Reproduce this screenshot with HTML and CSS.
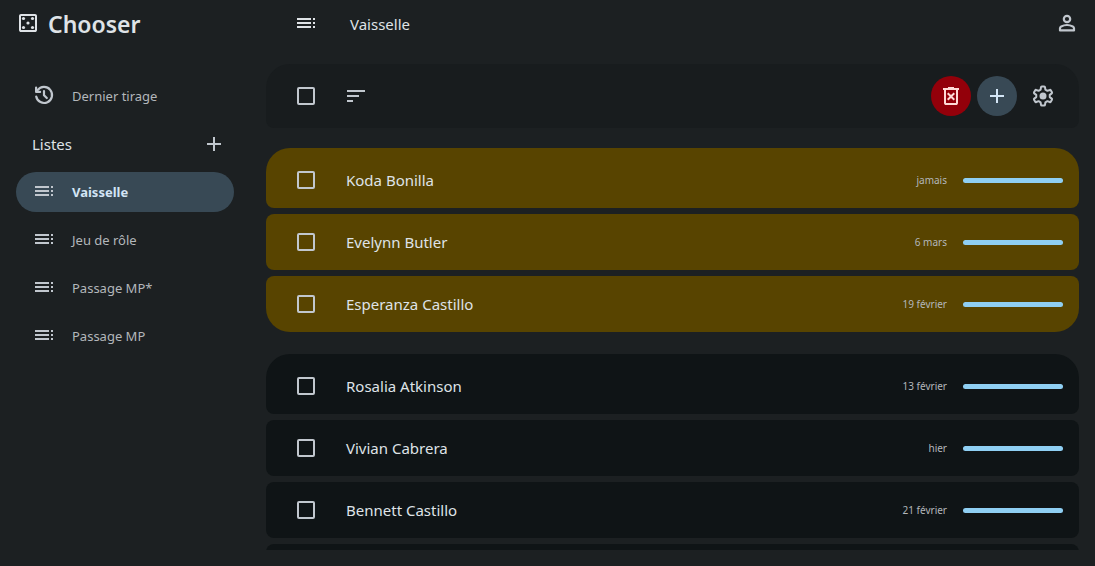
FILE: index.html
```html
<!DOCTYPE html>
<html lang="fr">
<head>
<meta charset="utf-8">
<meta name="viewport" content="width=device-width, initial-scale=1">
<title>Chooser</title>
<link rel="stylesheet" href="styles.css">
</head>
<body>
<svg class="sprite" aria-hidden="true">
  <symbol id="toc" viewBox="0 0 24 24"><path d="M3 7h14v2H3zM3 11h14v2H3zM3 15h14v2H3zM19 7h2v2h-2zM19 11h2v2h-2zM19 15h2v2h-2z"/></symbol>
  <symbol id="plus" viewBox="0 0 24 24"><path d="M11 13H5v-2h6V5h2v6h6v2h-6v6h-2z"/></symbol>
  <symbol id="casino" viewBox="0 0 24 24"><path fill-rule="evenodd" d="M5 3h14q.83 0 1.41.59T21 5v14q0 .83-.59 1.41T19 21H5q-.83 0-1.41-.59T3 19V5q0-.83.59-1.41T5 3zm0 2v14h14V5z"/><circle cx="7.5" cy="7.5" r="1.6"/><circle cx="16.5" cy="7.5" r="1.6"/><circle cx="12" cy="12" r="1.6"/><circle cx="7.5" cy="16.5" r="1.6"/><circle cx="16.5" cy="16.5" r="1.6"/></symbol>
  <symbol id="history" viewBox="0 0 24 24"><g fill="none" stroke="currentColor" stroke-width="2.2" stroke-linecap="round" stroke-linejoin="round"><path d="M4.200 13.500A8 8 0 1 0 5.600 7.200L4.600 8.200M12 8v4.200l2.800 2.800"/><path d="M4.100 4.500v4.400h4"/></g></symbol>
  <symbol id="sort" viewBox="0 0 24 24"><path d="M3 18v-2h6v2zM3 13v-2h12v2zM3 8V6h18v2z"/></symbol>
  <symbol id="person" viewBox="0 0 24 24"><g fill="none" stroke="currentColor" stroke-width="2.200" stroke-linejoin="round"><circle cx="12" cy="8" r="3.200"/><path d="M5 19.400v-2.200q0-1.200 1.200-1.800Q9 14 12 14t5.800 1.400q1.200.6 1.200 1.800v2.200z"/></g></symbol>
  <symbol id="trash" viewBox="0 0 24 24"><path d="m9.4 16.5 2.6-2.6 2.6 2.6 1.4-1.4-2.6-2.6L16 9.900l-1.400-1.400-2.600 2.600-2.600-2.600L8 9.900l2.600 2.600L8 15.100zM7 21q-.83 0-1.410-.590T5 19V6H4V4h5V3h6v1h5v2h-1v13q0 .830-.590 1.410T17 21zM17 6H7v13h10z"/></symbol>
  <symbol id="gear" viewBox="0 0 24 24"><path fill="none" stroke="currentColor" stroke-width="2" stroke-linejoin="round" d="M10.800 2.500h2.400q.7 0 .8.700l.4 2.500 2 1.150 2.300-.9q.7-.3 1.050.3l1.200 2.100q.35.600-.2 1.050l-2 1.500v2.200l2 1.500q.550.450.2 1.050l-1.200 2.100q-.350.600-1.050.300l-2.300-.900-2 1.150-.4 2.500q-.1.700-.8.700h-2.400q-.7 0-.8-.700l-.4-2.500-2-1.150-2.300.9q-.7.300-1.050-.3l-1.200-2.100q-.350-.600.2-1.050l2-1.500v-2.200l-2-1.500q-.550-.450-.2-1.050l1.200-2.100q.350-.600 1.050-.300l2.300.9 2-1.150.4-2.500q.1-.7.8-.7z"/><circle cx="12" cy="12" r="3.500"/></symbol>
</svg>

<div class="app">
  <aside class="sidebar">
    <h1 class="brand"><svg class="icon"><use href="#casino"/></svg>Chooser</h1>
    <nav class="nav" aria-label="Navigation">
      <a class="nav-item" href="#tirage"><svg class="icon"><use href="#history"/></svg>Dernier tirage</a>
      <div class="nav-heading">
        <h2 class="nav-title">Listes</h2>
        <button class="icon-button" type="button" aria-label="Ajouter une liste"><svg class="icon"><use href="#plus"/></svg></button>
      </div>
      <a class="nav-item active" href="#vaisselle" aria-current="page"><svg class="icon"><use href="#toc"/></svg>Vaisselle</a>
      <a class="nav-item" href="#jeu"><svg class="icon"><use href="#toc"/></svg>Jeu de rôle</a>
      <a class="nav-item" href="#mp-etoile"><svg class="icon"><use href="#toc"/></svg>Passage MP*</a>
      <a class="nav-item" href="#mp"><svg class="icon"><use href="#toc"/></svg>Passage MP</a>
    </nav>
  </aside>

  <main class="main">
    <header class="topbar">
      <svg class="icon"><use href="#toc"/></svg>
      <h2 class="page-title">Vaisselle</h2>
      <button class="account" type="button" aria-label="Compte"><svg class="icon"><use href="#person"/></svg></button>
    </header>

    <div class="toolbar">
      <input class="check" type="checkbox" aria-label="Tout sélectionner">
      <button class="icon-button sort" type="button" aria-label="Trier"><svg class="icon"><use href="#sort"/></svg></button>
      <div class="actions">
        <button class="icon-button danger" type="button" aria-label="Supprimer"><svg class="icon"><use href="#trash"/></svg></button>
        <button class="icon-button tonal" type="button" aria-label="Ajouter"><svg class="icon"><use href="#plus"/></svg></button>
        <button class="icon-button" type="button" aria-label="Paramètres"><svg class="icon"><use href="#gear"/></svg></button>
      </div>
    </div>

    <div class="lists">
      <ul class="group selected">
        <li class="row"><input class="check" type="checkbox" id="p1"><label class="name" for="p1">Koda Bonilla</label><span class="date">jamais</span><span class="bar"></span></li>
        <li class="row"><input class="check" type="checkbox" id="p2"><label class="name" for="p2">Evelynn Butler</label><span class="date">6 mars</span><span class="bar"></span></li>
        <li class="row"><input class="check" type="checkbox" id="p3"><label class="name" for="p3">Esperanza Castillo</label><span class="date">19 février</span><span class="bar"></span></li>
      </ul>
      <ul class="group">
        <li class="row"><input class="check" type="checkbox" id="p4"><label class="name" for="p4">Rosalia Atkinson</label><span class="date">13 février</span><span class="bar"></span></li>
        <li class="row"><input class="check" type="checkbox" id="p5"><label class="name" for="p5">Vivian Cabrera</label><span class="date">hier</span><span class="bar"></span></li>
        <li class="row"><input class="check" type="checkbox" id="p6"><label class="name" for="p6">Bennett Castillo</label><span class="date">21 février</span><span class="bar"></span></li>
        <li class="row" aria-hidden="true"></li>
      </ul>
    </div>
  </main>
</div>
</body>
</html>
```

FILE: styles.css
```css
* { box-sizing: border-box; }

body {
  margin: 0;
  background: #1c2022;
  color: #dfe3e7;
  font: 15px/24px "Noto Sans", sans-serif;
}

h1, h2, ul { margin: 0; padding: 0; font: inherit; }

button { padding: 0; border: 0; background: none; color: inherit; font: inherit; }

.sprite { display: none; }

.icon { display: block; flex: none; width: 24px; height: 24px; fill: currentColor; }

.app { display: flex; height: 100vh; }

.sidebar { flex: none; width: 250px; padding: 0 16px; }

.brand {
  display: flex;
  align-items: center;
  gap: 8px;
  height: 48px;
  font-size: 23px;
  font-weight: 600;
  line-height: 32px;
}

.brand .icon { margin-bottom: 2px; }

.nav { display: flex; flex-direction: column; gap: 8px; padding-top: 28px; }

.nav-item {
  display: flex;
  align-items: center;
  gap: 16px;
  height: 40px;
  padding: 0 16px;
  border-radius: 20px;
  color: #b3b7bb;
  font-size: 13px;
  line-height: 20px;
  text-decoration: none;
}

.nav-item .icon { margin-bottom: 2px; color: #c1c7ce; }

.active { background: #384955; color: #d3e5f5; font-weight: 700; }

.nav-heading {
  display: flex;
  align-items: center;
  justify-content: space-between;
  padding-left: 16px;
}

.icon-button {
  display: flex;
  align-items: center;
  justify-content: center;
  width: 40px;
  height: 40px;
  border-radius: 50%;
  color: #c1c7ce;
}

.main {
  display: flex;
  flex: 1;
  flex-direction: column;
  min-width: 0;
  padding: 0 16px 16px;
}

.topbar {
  display: flex;
  flex: none;
  align-items: center;
  gap: 32px;
  height: 48px;
  padding-left: 28px;
}

.topbar .icon { margin-bottom: 2px; }

.page-title { flex: 1; }

.account { color: #c1c7ce; }

.toolbar {
  display: flex;
  flex: none;
  align-items: center;
  height: 64px;
  margin-top: 16px;
  padding: 0 16px 0 31px;
  border-radius: 24px 24px 8px 8px;
  background: #181c1e;
}

.check {
  appearance: none;
  flex: none;
  width: 18px;
  height: 18px;
  margin: 0;
  border: 2px solid #c1c7ce;
  border-radius: 2px;
}

.sort { margin-left: 21px; }

.actions { display: flex; gap: 6px; margin-left: auto; }

.danger { background: #93000a; color: #ffdad6; }

.tonal { background: #384955; color: #d3e5f5; }

.lists { flex: 1; min-height: 0; margin-top: 20px; overflow: hidden; }

.group { display: flex; flex-direction: column; gap: 6px; margin-bottom: 22px; list-style: none; }

.row {
  display: flex;
  align-items: center;
  height: 56px;
  padding: 0 16px 0 31px;
  border-radius: 8px;
  background: #0f1416;
}

.row:first-child { height: 60px; padding-top: 4px; border-radius: 24px 24px 8px 8px; }

.row:last-child { border-radius: 8px 8px 24px 24px; }

.selected .row { background: #584400; }

.name { flex: 1; margin-left: 31px; }

.date { color: #b3b7bb; font-size: 10px; line-height: 16px; }

.bar { width: 100px; height: 5px; margin-left: 16px; border-radius: 3px; background: #8fcff3; }
```
